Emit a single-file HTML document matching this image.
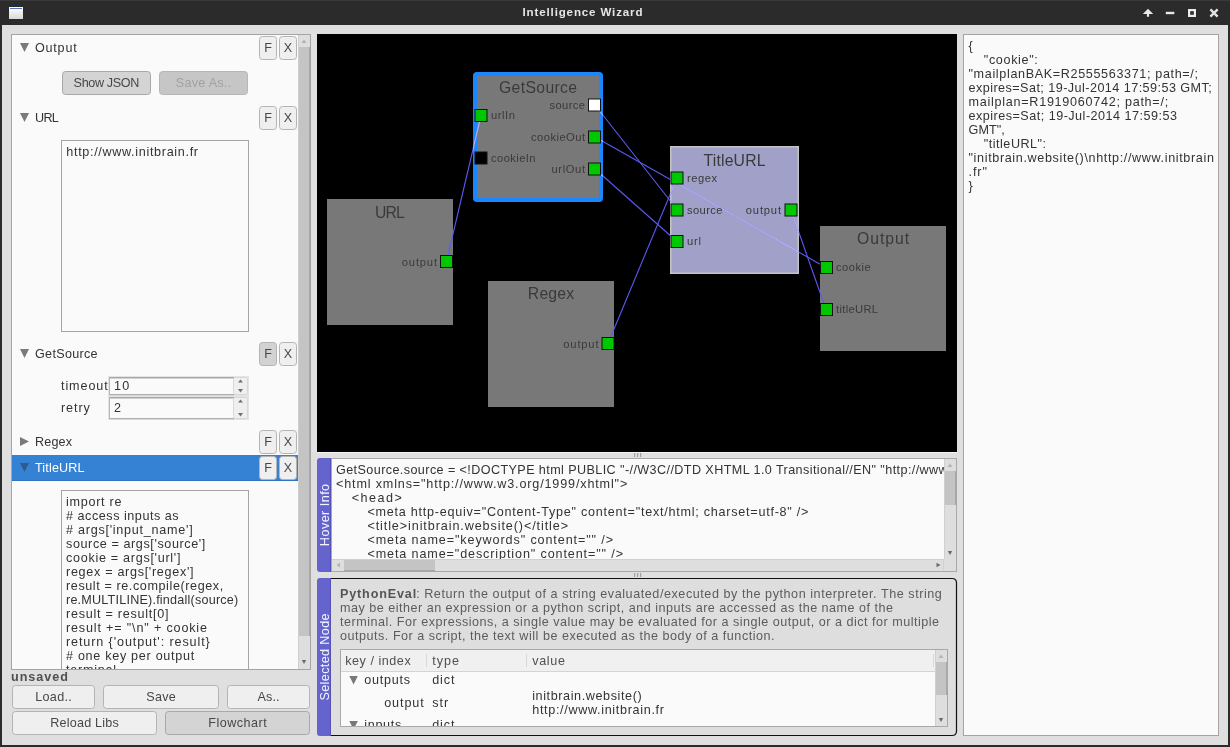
<!DOCTYPE html>
<html><head><meta charset="utf-8"><title>Intelligence Wizard</title>
<style>html,body{margin:0;padding:0;width:1230px;height:747px;overflow:hidden;background:#2b2b2b;}text{font-family:"Liberation Sans",sans-serif;white-space:pre;}</style></head>
<body>
<svg width="1230" height="747" viewBox="0 0 1230 747" style="position:absolute;left:0;top:0;will-change:transform;font-family:'Liberation Sans',sans-serif">
<rect x="0" y="0" width="1230" height="747" fill="#2b2b2b" />
<rect x="0" y="0" width="1230" height="1" fill="#3a3a3a" />
<rect x="2" y="25" width="1226" height="720" fill="#dfdfdf" />
<rect x="9" y="7" width="14" height="12" fill="#eaeaea" />
<defs><linearGradient id="ig" x1="0" y1="0" x2="0" y2="1"><stop offset="0" stop-color="#ffffff"/><stop offset="1" stop-color="#d8d8d4"/></linearGradient></defs>
<rect x="9" y="7" width="14" height="12" fill="url(#ig)" />
<rect x="10" y="8" width="12" height="1" fill="#4a78c0" />
<text x="582.5" y="16" font-size="11.55" font-weight="bold" fill="#e6e6e6" text-anchor="middle" textLength="119.96" lengthAdjust="spacing" >Intelligence Wizard</text>
<polygon points="1148,8.8 1153.2,14 1149.1,14 1149.1,16.8 1146.9,16.8 1146.9,14 1142.8,14" fill="#e8e8e8"/>
<rect x="1165.8" y="11.8" width="8.5" height="2.4" fill="#e8e8e8" />
<rect x="1189.1" y="10.1" width="5.8" height="5.8" fill="none" stroke="#ececec" stroke-width="2.2"/>
<path d="M1210.4,9.4 L1217.6,16.6 M1217.6,9.4 L1210.4,16.6" stroke="#e4e4e4" stroke-width="2.4"/>
<rect x="11" y="34" width="300" height="636" fill="#a4a4a4" />
<rect x="12" y="35" width="298" height="634" fill="#fafafa" />
<rect x="298" y="35" width="12" height="634" fill="#dedede" />
<rect x="298" y="47" width="12" height="589" fill="#c4c4c4" />
<rect x="309" y="47" width="1" height="589" fill="#a8a8a8" />
<rect x="298" y="35" width="1" height="634" fill="#cfcfcf" />
<polygon points="304,39.5 306.5,43 301.5,43" fill="#b4b4b4"/>
<polygon points="301.8,660 306.2,660 304,664" fill="#6a6a6a"/>
<polygon points="20,43 29,43 24.5,52" fill="#7a7a7a"/>
<text x="35" y="52" font-size="12.60" fill="#333" text-anchor="start" textLength="41.69" lengthAdjust="spacing" >Output</text>
<rect x="259.5" y="36.5" width="17" height="23" rx="3" fill="#efefef" stroke="#b4b4b4" stroke-width="1"/>
<text x="268.0" y="51.5" font-size="12.60" fill="#474747" text-anchor="middle" textLength="6.90" lengthAdjust="spacing" >F</text>
<rect x="279.5" y="36.5" width="17" height="23" rx="3" fill="#efefef" stroke="#b4b4b4" stroke-width="1"/>
<text x="288.0" y="51.5" font-size="12.60" fill="#474747" text-anchor="middle" textLength="8.22" lengthAdjust="spacing" >X</text>
<rect x="62.5" y="71.5" width="88" height="23" rx="3" fill="#d4d4d4" stroke="#a8a8a8" stroke-width="1"/>
<text x="106.5" y="87" font-size="12.60" fill="#474747" text-anchor="middle" textLength="65.77" lengthAdjust="spacing" >Show JSON</text>
<rect x="159.5" y="71.5" width="88" height="23" rx="3" fill="#c6c6c6" stroke="#b6b6b6" stroke-width="1"/>
<text x="203.5" y="87" font-size="12.60" fill="#a2a2a2" text-anchor="middle" textLength="55.36" lengthAdjust="spacing" >Save As..</text>
<polygon points="20,113 29,113 24.5,122" fill="#7a7a7a"/>
<text x="35" y="122" font-size="12.60" fill="#333" text-anchor="start" textLength="23.81" lengthAdjust="spacing" >URL</text>
<rect x="259.5" y="106.5" width="17" height="23" rx="3" fill="#efefef" stroke="#b4b4b4" stroke-width="1"/>
<text x="268.0" y="121.5" font-size="12.60" fill="#474747" text-anchor="middle" textLength="6.90" lengthAdjust="spacing" >F</text>
<rect x="279.5" y="106.5" width="17" height="23" rx="3" fill="#efefef" stroke="#b4b4b4" stroke-width="1"/>
<text x="288.0" y="121.5" font-size="12.60" fill="#474747" text-anchor="middle" textLength="8.22" lengthAdjust="spacing" >X</text>
<rect x="61" y="140" width="188" height="192" fill="#a4a4a4" />
<rect x="62" y="141" width="186" height="190" fill="#fafafa" />
<text x="66.3" y="155.5" font-size="12.60" fill="#333" text-anchor="start" textLength="131.72" lengthAdjust="spacing" >http://www.initbrain.fr</text>
<polygon points="20,349 29,349 24.5,358" fill="#7a7a7a"/>
<text x="35" y="358" font-size="12.60" fill="#333" text-anchor="start" textLength="62.60" lengthAdjust="spacing" >GetSource</text>
<rect x="259.5" y="342.5" width="17" height="23" rx="3" fill="#d2d2d2" stroke="#b4b4b4" stroke-width="1"/>
<text x="268.0" y="357.5" font-size="12.60" fill="#474747" text-anchor="middle" textLength="6.90" lengthAdjust="spacing" >F</text>
<rect x="279.5" y="342.5" width="17" height="23" rx="3" fill="#efefef" stroke="#b4b4b4" stroke-width="1"/>
<text x="288.0" y="357.5" font-size="12.60" fill="#474747" text-anchor="middle" textLength="8.22" lengthAdjust="spacing" >X</text>
<text x="61" y="390" font-size="12.60" fill="#333" text-anchor="start" textLength="46.76" lengthAdjust="spacing" >timeout</text>
<text x="61" y="412" font-size="12.60" fill="#333" text-anchor="start" textLength="28.79" lengthAdjust="spacing" >retry</text>
<rect x="108" y="376" width="141" height="44" fill="#e3e3e3" />
<rect x="109" y="377" width="125" height="18" fill="#fafafa" />
<rect x="109" y="377" width="125" height="1.5" fill="#a8a8a8" />
<rect x="109" y="394" width="125" height="1.2" fill="#b0b0b0" />
<rect x="109" y="377" width="1" height="18" fill="#b8b8b8" />
<rect x="233.5" y="377.5" width="14" height="17" rx="2" fill="#efefef" stroke="#d8d8d8"/>
<polygon points="240.5,379.5 243,382.5 238,382.5" fill="#707070"/>
<polygon points="238,389 243,389 240.5,392.5" fill="#707070"/>
<text x="114" y="390" font-size="12.60" fill="#333" text-anchor="start" textLength="15.27" lengthAdjust="spacing" >10</text>
<rect x="109" y="397" width="125" height="22" fill="#fafafa" />
<rect x="109" y="397" width="125" height="1.5" fill="#a8a8a8" />
<rect x="109" y="418" width="125" height="1.2" fill="#b0b0b0" />
<rect x="109" y="397" width="1" height="22" fill="#b8b8b8" />
<rect x="233.5" y="397.5" width="14" height="21" rx="2" fill="#efefef" stroke="#d8d8d8"/>
<polygon points="240.5,399.5 243,402.5 238,402.5" fill="#707070"/>
<polygon points="238,413 243,413 240.5,416.5" fill="#707070"/>
<text x="114" y="412" font-size="12.60" fill="#333" text-anchor="start" textLength="7.63" lengthAdjust="spacing" >2</text>
<polygon points="20,437 29,441.5 20,446" fill="#7a7a7a"/>
<text x="35" y="446" font-size="12.60" fill="#333" text-anchor="start" textLength="37.07" lengthAdjust="spacing" >Regex</text>
<rect x="259.5" y="430.5" width="17" height="23" rx="3" fill="#efefef" stroke="#b4b4b4" stroke-width="1"/>
<text x="268.0" y="445.5" font-size="12.60" fill="#474747" text-anchor="middle" textLength="6.90" lengthAdjust="spacing" >F</text>
<rect x="279.5" y="430.5" width="17" height="23" rx="3" fill="#efefef" stroke="#b4b4b4" stroke-width="1"/>
<text x="288.0" y="445.5" font-size="12.60" fill="#474747" text-anchor="middle" textLength="8.22" lengthAdjust="spacing" >X</text>
<rect x="12" y="455" width="286" height="26" fill="#3582d5" />
<rect x="12" y="480" width="286" height="1" fill="#2f74c0" />
<polygon points="20,463 29,463 24.5,472" fill="#2c5c8e"/>
<text x="35" y="472" font-size="12.60" fill="#ffffff" text-anchor="start" textLength="49.52" lengthAdjust="spacing" >TitleURL</text>
<rect x="259.5" y="456.5" width="17" height="23" rx="3" fill="#efefef" stroke="#b4b4b4" stroke-width="1"/>
<text x="268.0" y="471.5" font-size="12.60" fill="#474747" text-anchor="middle" textLength="6.90" lengthAdjust="spacing" >F</text>
<rect x="279.5" y="456.5" width="17" height="23" rx="3" fill="#efefef" stroke="#b4b4b4" stroke-width="1"/>
<text x="288.0" y="471.5" font-size="12.60" fill="#474747" text-anchor="middle" textLength="8.22" lengthAdjust="spacing" >X</text>
<rect x="61" y="490" width="188" height="190" fill="#a4a4a4" />
<rect x="62" y="491" width="186" height="188" fill="#fafafa" />
<text x="66" y="506" font-size="12.60" fill="#333" text-anchor="start" textLength="55.49" lengthAdjust="spacing" >import re</text>
<text x="66" y="520" font-size="12.60" fill="#333" text-anchor="start" textLength="112.66" lengthAdjust="spacing" ># access inputs as</text>
<text x="66" y="534" font-size="12.60" fill="#333" text-anchor="start" textLength="126.68" lengthAdjust="spacing" ># args['input_name']</text>
<text x="66" y="548" font-size="12.60" fill="#333" text-anchor="start" textLength="139.29" lengthAdjust="spacing" >source = args['source']</text>
<text x="66" y="562" font-size="12.60" fill="#333" text-anchor="start" textLength="114.41" lengthAdjust="spacing" >cookie = args['url']</text>
<text x="66" y="576" font-size="12.60" fill="#333" text-anchor="start" textLength="127.48" lengthAdjust="spacing" >regex = args['regex']</text>
<text x="66" y="590" font-size="12.60" fill="#333" text-anchor="start" textLength="157.24" lengthAdjust="spacing" >result = re.compile(regex,</text>
<text x="66" y="604" font-size="12.60" fill="#333" text-anchor="start" textLength="172.21" lengthAdjust="spacing" >re.MULTILINE).findall(source)</text>
<text x="66" y="618" font-size="12.60" fill="#333" text-anchor="start" textLength="102.58" lengthAdjust="spacing" >result = result[0]</text>
<text x="66" y="632" font-size="12.60" fill="#333" text-anchor="start" textLength="141.01" lengthAdjust="spacing" >result += "\n" + cookie</text>
<text x="66" y="646" font-size="12.60" fill="#333" text-anchor="start" textLength="143.77" lengthAdjust="spacing" >return {'output': result}</text>
<text x="66" y="660" font-size="12.60" fill="#333" text-anchor="start" textLength="128.17" lengthAdjust="spacing" ># one key per output</text>
<text x="66" y="674" font-size="12.60" fill="#333" text-anchor="start" textLength="50.13" lengthAdjust="spacing" >terminal</text>
<rect x="11" y="669" width="300" height="1" fill="#a4a4a4" />
<rect x="11" y="670" width="300" height="14" fill="#dfdfdf" />
<text x="11" y="681" font-size="12.60" font-weight="bold" fill="#505050" text-anchor="start" textLength="56.88" lengthAdjust="spacing" >unsaved</text>
<rect x="12.5" y="685.5" width="82" height="23" rx="3" fill="#efefef" stroke="#b4b4b4" stroke-width="1"/>
<text x="53.5" y="701" font-size="12.60" fill="#474747" text-anchor="middle" textLength="36.42" lengthAdjust="spacing" >Load..</text>
<rect x="103.5" y="685.5" width="115" height="23" rx="3" fill="#efefef" stroke="#b4b4b4" stroke-width="1"/>
<text x="161.0" y="701" font-size="12.60" fill="#474747" text-anchor="middle" textLength="29.46" lengthAdjust="spacing" >Save</text>
<rect x="227.5" y="685.5" width="82" height="23" rx="3" fill="#efefef" stroke="#b4b4b4" stroke-width="1"/>
<text x="268.5" y="701" font-size="12.60" fill="#474747" text-anchor="middle" textLength="22.09" lengthAdjust="spacing" >As..</text>
<rect x="12.5" y="711.5" width="144" height="23" rx="3" fill="#efefef" stroke="#b4b4b4" stroke-width="1"/>
<text x="84.5" y="727" font-size="12.60" fill="#474747" text-anchor="middle" textLength="68.53" lengthAdjust="spacing" >Reload Libs</text>
<rect x="165.5" y="711.5" width="144" height="23" rx="3" fill="#d4d4d4" stroke="#a8a8a8" stroke-width="1"/>
<text x="237.5" y="727" font-size="12.60" fill="#474747" text-anchor="middle" textLength="58.59" lengthAdjust="spacing" >Flowchart</text>
<rect x="311" y="34" width="6" height="418" fill="#e2e2e2" />
<rect x="317" y="34" width="640" height="418" fill="#000000" />
<svg x="317" y="34" width="640" height="418" viewBox="317 34 640 418" overflow="hidden">
<rect x="327" y="199" width="126" height="126" fill="#787878" />
<text x="390.0" y="218" font-size="15.75" fill="#3a3a3a" text-anchor="middle" textLength="29.76" lengthAdjust="spacing" >URL</text>
<rect x="488" y="281" width="126" height="126" fill="#787878" />
<text x="551.0" y="299" font-size="15.75" fill="#3a3a3a" text-anchor="middle" textLength="46.34" lengthAdjust="spacing" >Regex</text>
<rect x="820" y="226" width="126" height="125" fill="#787878" />
<text x="883.0" y="244" font-size="15.75" fill="#3a3a3a" text-anchor="middle" textLength="52.11" lengthAdjust="spacing" >Output</text>
<rect x="670" y="146" width="129" height="128" fill="#c4c4c4" />
<rect x="671.5" y="147.5" width="126" height="125" fill="#a0a0c8" />
<text x="734.5" y="166" font-size="15.75" fill="#3a3a3a" text-anchor="middle" textLength="61.90" lengthAdjust="spacing" >TitleURL</text>
<rect x="475" y="74" width="126" height="126" rx="2" fill="#787878" stroke="#1a86ff" stroke-width="4"/>
<text x="538" y="93" font-size="15.75" fill="#3a3a3a" text-anchor="middle" textLength="78.25" lengthAdjust="spacing" >GetSource</text>
<g stroke="#5a5af4" stroke-width="1.1" fill="none">
<line x1="446.5" y1="261.5" x2="481" y2="115.5"/>
<line x1="595" y1="105" x2="677" y2="209.5"/>
<line x1="595" y1="137" x2="826" y2="267.5"/>
<line x1="608" y1="343.5" x2="677" y2="178"/>
<line x1="595" y1="169" x2="677" y2="241.5"/>
<line x1="791" y1="210" x2="826" y2="309.5"/>
</g>
<clipPath id="nc"><rect x="473" y="72" width="130" height="130"/><rect x="670" y="146" width="129" height="128"/></clipPath>
<g stroke="#b8b8f6" stroke-width="1.1" fill="none" clip-path="url(#nc)">
<line x1="446.5" y1="261.5" x2="481" y2="115.5"/>
<line x1="595" y1="105" x2="677" y2="209.5"/>
<line x1="595" y1="137" x2="826" y2="267.5"/>
<line x1="608" y1="343.5" x2="677" y2="178"/>
<line x1="595" y1="169" x2="677" y2="241.5"/>
<line x1="791" y1="210" x2="826" y2="309.5"/>
</g>
<rect x="440.5" y="255.5" width="12" height="12" fill="#00c800" stroke="#111" stroke-width="1"/>
<text x="437" y="266" font-size="11.20" fill="#3a3a3a" text-anchor="end" textLength="35.19" lengthAdjust="spacing" >output</text>
<rect x="602.0" y="337.5" width="12" height="12" fill="#00c800" stroke="#111" stroke-width="1"/>
<text x="598.5" y="348" font-size="11.20" fill="#3a3a3a" text-anchor="end" textLength="35.19" lengthAdjust="spacing" >output</text>
<rect x="475.0" y="109.5" width="12" height="12" fill="#00c800" stroke="#111" stroke-width="1"/>
<text x="491" y="119" font-size="11.20" fill="#3a3a3a" text-anchor="start" textLength="24.02" lengthAdjust="spacing" >urlIn</text>
<rect x="475.0" y="152.0" width="12" height="12" fill="#000000" stroke="#111" stroke-width="1"/>
<text x="491" y="161.5" font-size="11.20" fill="#3a3a3a" text-anchor="start" textLength="44.54" lengthAdjust="spacing" >cookieIn</text>
<rect x="588.5" y="99.0" width="12" height="12" fill="#ffffff" stroke="#111" stroke-width="1"/>
<text x="585" y="109" font-size="11.20" fill="#3a3a3a" text-anchor="end" textLength="35.43" lengthAdjust="spacing" >source</text>
<rect x="588.5" y="131.0" width="12" height="12" fill="#00c800" stroke="#111" stroke-width="1"/>
<text x="585" y="141" font-size="11.20" fill="#3a3a3a" text-anchor="end" textLength="53.98" lengthAdjust="spacing" >cookieOut</text>
<rect x="588.5" y="163.0" width="12" height="12" fill="#00c800" stroke="#111" stroke-width="1"/>
<text x="585" y="173" font-size="11.20" fill="#3a3a3a" text-anchor="end" textLength="33.46" lengthAdjust="spacing" >urlOut</text>
<rect x="671.0" y="172.0" width="12" height="12" fill="#00c800" stroke="#111" stroke-width="1"/>
<text x="687" y="182" font-size="11.20" fill="#3a3a3a" text-anchor="start" textLength="30.18" lengthAdjust="spacing" >regex</text>
<rect x="671.0" y="204.0" width="12" height="12" fill="#00c800" stroke="#111" stroke-width="1"/>
<text x="687" y="214" font-size="11.20" fill="#3a3a3a" text-anchor="start" textLength="35.43" lengthAdjust="spacing" >source</text>
<rect x="671.0" y="235.5" width="12" height="12" fill="#00c800" stroke="#111" stroke-width="1"/>
<text x="687" y="245" font-size="11.20" fill="#3a3a3a" text-anchor="start" textLength="14.11" lengthAdjust="spacing" >url</text>
<rect x="785.0" y="204.0" width="12" height="12" fill="#00c800" stroke="#111" stroke-width="1"/>
<text x="781" y="214" font-size="11.20" fill="#3a3a3a" text-anchor="end" textLength="35.19" lengthAdjust="spacing" >output</text>
<rect x="820.5" y="261.5" width="12" height="12" fill="#00c800" stroke="#111" stroke-width="1"/>
<text x="836" y="271" font-size="11.20" fill="#3a3a3a" text-anchor="start" textLength="34.63" lengthAdjust="spacing" >cookie</text>
<rect x="820.5" y="303.5" width="12" height="12" fill="#00c800" stroke="#111" stroke-width="1"/>
<text x="836" y="313" font-size="11.20" fill="#3a3a3a" text-anchor="start" textLength="42.03" lengthAdjust="spacing" >titleURL</text>
</svg>
<rect x="317" y="452" width="640" height="1" fill="#f2f2f2" />
<rect x="634" y="453" width="1.2" height="4" fill="#a0a0a0" />
<rect x="637" y="453" width="1.2" height="4" fill="#a0a0a0" />
<rect x="640" y="453" width="1.2" height="4" fill="#a0a0a0" />
<rect x="634" y="573" width="1.2" height="4" fill="#a0a0a0" />
<rect x="637" y="573" width="1.2" height="4" fill="#a0a0a0" />
<rect x="640" y="573" width="1.2" height="4" fill="#a0a0a0" />
<path d="M320,458 H331 V572 H320 Q317,572 317,569 V461 Q317,458 320,458 Z" fill="#6464cc"/>
<rect x="330" y="458" width="1" height="114" fill="#5252b8" />
<g transform="translate(328.5,515.0) rotate(-90)">
<text x="0" y="0" font-size="12.60" fill="#f4f4ff" text-anchor="middle" textLength="62.31" lengthAdjust="spacing" >Hover Info</text>
</g>
<rect x="331" y="458" width="626" height="114" fill="#a8a8a8" />
<rect x="332" y="459" width="624" height="112" fill="#fafafa" />
<svg x="332" y="459" width="612" height="100" viewBox="332 459 612 100" overflow="hidden">
<text x="336.0" y="474" font-size="12.60" fill="#333" text-anchor="start" textLength="900.26" lengthAdjust="spacing" >GetSource.source = &lt;!DOCTYPE html PUBLIC "-//W3C//DTD XHTML 1.0 Transitional//EN" "http://www.w3.org/TR/xhtml1/DTD/xhtml1-transitional.dtd"&gt;</text>
<text x="336.0" y="488" font-size="12.60" fill="#333" text-anchor="start" textLength="291.27" lengthAdjust="spacing" >&lt;html xmlns="http://www.w3.org/1999/xhtml"&gt;</text>
<text x="351.7" y="502" font-size="12.60" fill="#333" text-anchor="start" textLength="50.07" lengthAdjust="spacing" >&lt;head&gt;</text>
<text x="367.4" y="516" font-size="12.60" fill="#333" text-anchor="start" textLength="441.04" lengthAdjust="spacing" >&lt;meta http-equiv="Content-Type" content="text/html; charset=utf-8" /&gt;</text>
<text x="367.4" y="530" font-size="12.60" fill="#333" text-anchor="start" textLength="200.67" lengthAdjust="spacing" >&lt;title&gt;initbrain.website()&lt;/title&gt;</text>
<text x="367.4" y="544" font-size="12.60" fill="#333" text-anchor="start" textLength="245.65" lengthAdjust="spacing" >&lt;meta name="keywords" content="" /&gt;</text>
<text x="367.4" y="558" font-size="12.60" fill="#333" text-anchor="start" textLength="255.62" lengthAdjust="spacing" >&lt;meta name="description" content="" /&gt;</text>
<text x="367.4" y="572" font-size="12.60" fill="#333" text-anchor="start" textLength="228.44" lengthAdjust="spacing" >&lt;meta name="author" content="" /&gt;</text>
</svg>
<rect x="944" y="459" width="12" height="112" fill="#dedede" />
<rect x="944" y="471" width="12" height="34" fill="#c4c4c4" />
<rect x="955" y="471" width="1" height="34" fill="#a8a8a8" />
<rect x="944" y="459" width="1" height="100" fill="#d0d0d0" />
<polygon points="950,463.5 952.5,467 947.5,467" fill="#b4b4b4"/>
<polygon points="947.8,551 952.2,551 950,555" fill="#6a6a6a"/>
<rect x="332" y="559" width="612" height="12" fill="#dedede" />
<rect x="344" y="559" width="91" height="12" fill="#c4c4c4" />
<rect x="344" y="570" width="91" height="1" fill="#a8a8a8" />
<rect x="332" y="559" width="612" height="1" fill="#d0d0d0" />
<polygon points="336.5,565 340,562.5 340,567.5" fill="#b4b4b4"/>
<polygon points="936.5,562.8 940.5,565 936.5,567.2" fill="#6a6a6a"/>
<rect x="943" y="559" width="1" height="12" fill="#d0d0d0" />
<path d="M320,578 H331 V736 H320 Q317,736 317,733 V581 Q317,578 320,578 Z" fill="#6464cc"/>
<rect x="330" y="578" width="1" height="158" fill="#5252b8" />
<g transform="translate(328.5,657.0) rotate(-90)">
<text x="0" y="0" font-size="12.60" fill="#f4f4ff" text-anchor="middle" textLength="87.15" lengthAdjust="spacing" >Selected Node</text>
</g>
<path d="M331,578.5 H952 Q956.5,578.5 956.5,583 V731 Q956.5,735.5 952,735.5 H331" fill="#dedede" stroke="#111" stroke-width="1.2"/>
<text x="340" y="598" font-size="12.60" font-weight="bold" fill="#555" text-anchor="start" textLength="76.14" lengthAdjust="spacing" >PythonEval</text>
<text x="416.14" y="598" font-size="12.60" fill="#5c5c5c" text-anchor="start" textLength="525.70" lengthAdjust="spacing" >: Return the output of a string evaluated/executed by the python interpreter. The string</text>
<text x="340" y="612" font-size="12.60" fill="#5c5c5c" text-anchor="start" textLength="553.02" lengthAdjust="spacing" >may be either an expression or a python script, and inputs are accessed as the name of the</text>
<text x="340" y="626" font-size="12.60" fill="#5c5c5c" text-anchor="start" textLength="599.14" lengthAdjust="spacing" >terminal. For expressions, a single value may be evaluated for a single output, or a dict for multiple</text>
<text x="340" y="640" font-size="12.60" fill="#5c5c5c" text-anchor="start" textLength="434.54" lengthAdjust="spacing" >outputs. For a script, the text will be executed as the body of a function.</text>
<rect x="340" y="649" width="608" height="78" fill="#a8a8a8" />
<rect x="341" y="650" width="606" height="76" fill="#fafafa" />
<rect x="341" y="650" width="594" height="21" fill="#f0f0f0" />
<rect x="341" y="671" width="594" height="1" fill="#d4d4d4" />
<rect x="426" y="654" width="1" height="13" fill="#d8d8d8" />
<rect x="526" y="654" width="1" height="13" fill="#d8d8d8" />
<rect x="933" y="654" width="1" height="13" fill="#d8d8d8" />
<text x="345.2" y="665" font-size="12.60" fill="#505050" text-anchor="start" textLength="65.51" lengthAdjust="spacing" >key / index</text>
<text x="432.2" y="665" font-size="12.60" fill="#505050" text-anchor="start" textLength="26.81" lengthAdjust="spacing" >type</text>
<text x="532.2" y="665" font-size="12.60" fill="#505050" text-anchor="start" textLength="32.78" lengthAdjust="spacing" >value</text>
<svg x="341" y="672" width="594" height="54" viewBox="341 672 594 54" overflow="hidden">
<polygon points="349.3,676 357.8,676 353.55,684.5" fill="#787878"/>
<text x="364.2" y="684" font-size="12.60" fill="#333" text-anchor="start" textLength="45.83" lengthAdjust="spacing" >outputs</text>
<text x="432.2" y="684" font-size="12.60" fill="#333" text-anchor="start" textLength="22.25" lengthAdjust="spacing" >dict</text>
<text x="384.2" y="707" font-size="12.60" fill="#333" text-anchor="start" textLength="39.58" lengthAdjust="spacing" >output</text>
<text x="432.2" y="707" font-size="12.60" fill="#333" text-anchor="start" textLength="15.89" lengthAdjust="spacing" >str</text>
<text x="532.2" y="699.5" font-size="12.60" fill="#333" text-anchor="start" textLength="109.49" lengthAdjust="spacing" >initbrain.website()</text>
<text x="532.2" y="713.5" font-size="12.60" fill="#333" text-anchor="start" textLength="131.72" lengthAdjust="spacing" >http://www.initbrain.fr</text>
<polygon points="349.3,721 357.8,721 353.55,729.5" fill="#787878"/>
<text x="364.2" y="729" font-size="12.60" fill="#333" text-anchor="start" textLength="37.12" lengthAdjust="spacing" >inputs</text>
<text x="432.2" y="729" font-size="12.60" fill="#333" text-anchor="start" textLength="22.25" lengthAdjust="spacing" >dict</text>
</svg>
<rect x="935" y="650" width="12" height="76" fill="#dedede" />
<rect x="935" y="662" width="12" height="33" fill="#c4c4c4" />
<rect x="946" y="662" width="1" height="33" fill="#a8a8a8" />
<rect x="935" y="650" width="1" height="76" fill="#d0d0d0" />
<polygon points="941,654.5 943.5,658 938.5,658" fill="#b4b4b4"/>
<polygon points="938.8,718 943.2,718 941,722" fill="#6a6a6a"/>
<rect x="963" y="34" width="256" height="702" fill="#a4a4a4" />
<rect x="964" y="35" width="254" height="700" fill="#fafafa" />
<text x="968.5" y="50" font-size="12.60" fill="#333" text-anchor="start" textLength="7.63" lengthAdjust="spacing" >{</text>
<text x="983.75875" y="64" font-size="12.60" fill="#333" text-anchor="start" textLength="54.03" lengthAdjust="spacing" >"cookie":</text>
<text x="968.5" y="78" font-size="12.60" fill="#333" text-anchor="start" textLength="229.48" lengthAdjust="spacing" >"mailplanBAK=R2555563371; path=/;</text>
<text x="968.5" y="92" font-size="12.60" fill="#333" text-anchor="start" textLength="243.29" lengthAdjust="spacing" >expires=Sat; 19-Jul-2014 17:59:53 GMT;</text>
<text x="968.5" y="106" font-size="12.60" fill="#333" text-anchor="start" textLength="199.65" lengthAdjust="spacing" >mailplan=R1919060742; path=/;</text>
<text x="968.5" y="120" font-size="12.60" fill="#333" text-anchor="start" textLength="208.45" lengthAdjust="spacing" >expires=Sat; 19-Jul-2014 17:59:53</text>
<text x="968.5" y="134" font-size="12.60" fill="#333" text-anchor="start" textLength="36.32" lengthAdjust="spacing" >GMT",</text>
<text x="983.75875" y="148" font-size="12.60" fill="#333" text-anchor="start" textLength="62.35" lengthAdjust="spacing" >"titleURL":</text>
<text x="968.5" y="162" font-size="12.60" fill="#333" text-anchor="start" textLength="245.40" lengthAdjust="spacing" >"initbrain.website()\nhttp://www.initbrain</text>
<text x="968.5" y="176" font-size="12.60" fill="#333" text-anchor="start" textLength="18.49" lengthAdjust="spacing" >.fr"</text>
<text x="968.5" y="190" font-size="12.60" fill="#333" text-anchor="start" textLength="7.63" lengthAdjust="spacing" >}</text>
</svg>
</body></html>
